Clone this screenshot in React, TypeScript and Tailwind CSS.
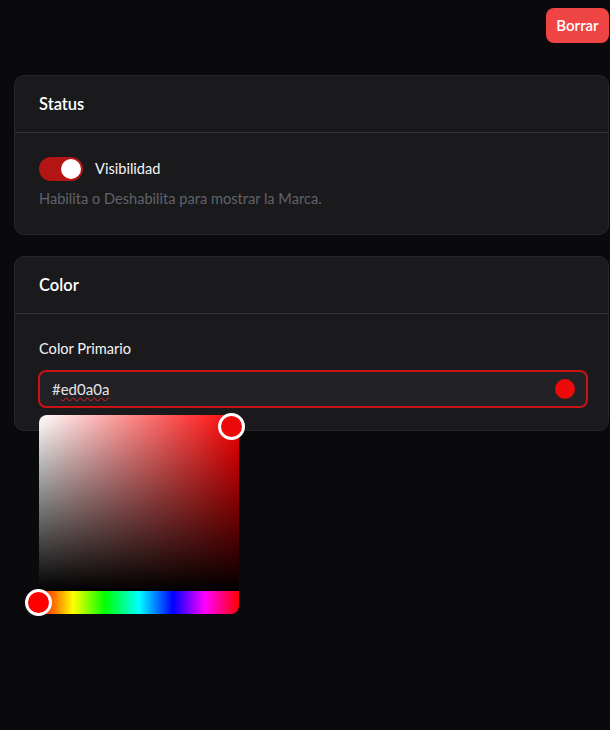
export default function App() {
  return (
    <div
      className="min-h-[730px] w-full bg-[#0a0a0c] text-white pl-[14px] pr-px pt-2"
      style={{ fontFamily: "Lato, 'Open Sans', sans-serif" }}
    >
      <div className="flex justify-end">
        <button className="h-[35px] w-[63px] rounded-lg bg-[#ef4444] text-[15px] font-semibold text-white">
          Borrar
        </button>
      </div>

      {/* Status */}
      <section className="mt-8 rounded-[10px] border border-[#27272a] bg-[#1a1a1d]">
        <div className="h-[57px] flex items-center px-6 border-b border-[#323236]">
          <h2 className="text-[16.5px] font-semibold">Status</h2>
        </div>
        <div className="px-6 pt-[24px] pb-[24px]">
          <div className="flex items-center gap-3">
            <div className="w-[44px] h-[24px] rounded-full bg-[#b31414] flex items-center justify-end px-[2px]">
              <div className="w-[20px] h-[20px] rounded-full bg-white" />
            </div>
            <span className="text-[14.6px] text-[#f4f4f5]">Visibilidad</span>
          </div>
          <p className="mt-[7px] text-[14.6px] text-[#5f636b]">
            Habilita o Deshabilita para mostrar la Marca.
          </p>
        </div>
      </section>

      {/* Color */}
      <section className="mt-[21px] rounded-[10px] border border-[#27272a] bg-[#1a1a1d]">
        <div className="h-[57px] flex items-center px-6 border-b border-[#323236]">
          <h2 className="text-[16.5px] font-semibold">Color</h2>
        </div>
        <div className="pl-6 pr-[20px] pt-[24px] pb-[22px]">
          <label className="block text-[14.6px] text-[#f4f4f5]">Color Primario</label>
          <div className="relative mt-[10px] -ml-px">
            <div className="h-[38px] rounded-lg border-2 border-[#c81414] bg-[#222226] flex items-center justify-between pl-3 pr-[11px]">
              <span className="text-[15px] text-[#e4e4e7]">
                #<span className="underline decoration-wavy decoration-[#e11d1d] decoration-1 underline-offset-2">ed0a0a</span>
              </span>
              <span className="w-[20px] h-[20px] rounded-full bg-[#ed0a0a]" />
            </div>

            {/* picker popover */}
            <div className="absolute left-px top-[45px] w-[200px] z-10">
              <div
                className="relative h-[176px] rounded-t-lg"
                style={{
                  background:
                    "linear-gradient(to top, #000, rgba(0,0,0,0)), linear-gradient(to right, #fff, rgba(255,255,255,0)), #ff0000",
                }}
              >
                <div className="absolute left-[179px] top-[-2px] w-[27px] h-[27px] rounded-full border-[3px] border-white bg-[#ed0a0a]" />
              </div>
              <div
                className="relative h-[23px] rounded-b-lg"
                style={{
                  background:
                    "linear-gradient(to right, #f00 0%, #ff0 17%, #0f0 33%, #0ff 50%, #00f 67%, #f0f 83%, #f00 100%)",
                }}
              >
                <div className="absolute left-[-14px] top-[-2px] w-[27px] h-[27px] rounded-full border-[3px] border-white bg-[#ff0000]" />
              </div>
            </div>
          </div>
        </div>
      </section>
    </div>
  );
}
